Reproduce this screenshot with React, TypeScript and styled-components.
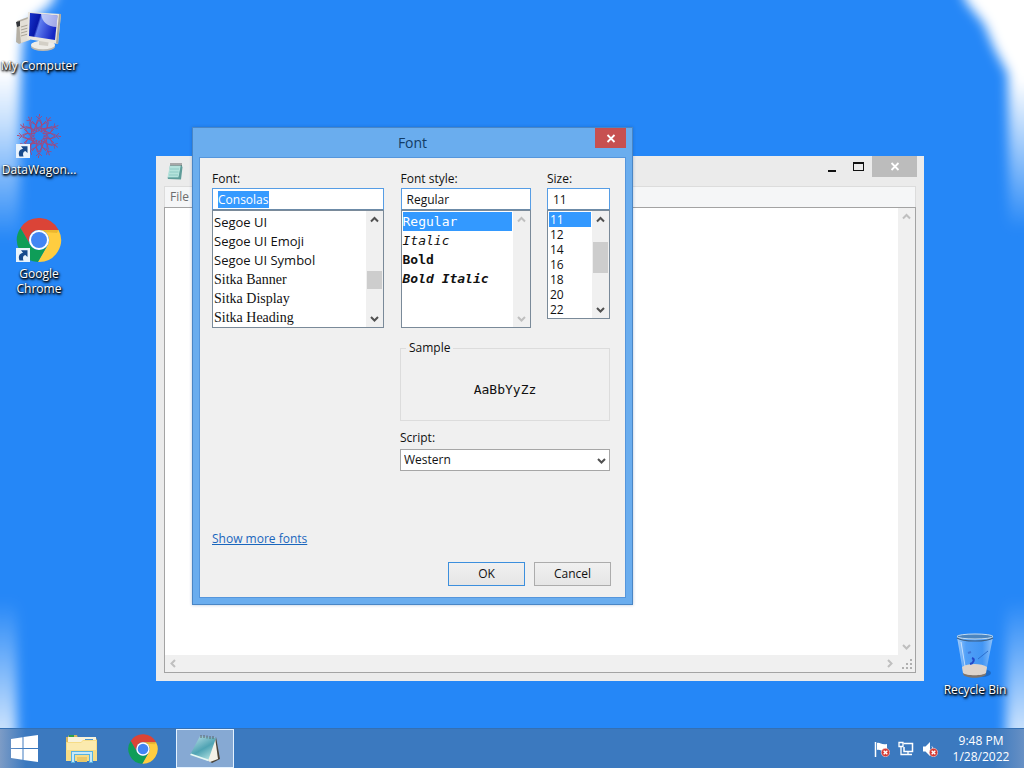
import { useEffect, useRef } from 'react';
import styled, { createGlobalStyle, css } from 'styled-components';

const uiFont = "'Open Sans', 'Noto Sans', sans-serif";
const monoFont = "'DejaVu Sans Mono', monospace";
const serifFont = "'Liberation Serif', serif";

const GlobalStyle = createGlobalStyle`
  * {
    box-sizing: border-box;
  }
  body {
    margin: 0;
    overflow: hidden;
    font-family: ${uiFont};
    font-size: 12px;
    line-height: 16px;
    color: #111;
  }
  button, input, select, textarea {
    font: inherit;
    color: inherit;
  }
  ul {
    margin: 0;
    padding: 0;
    list-style: none;
  }
  svg {
    display: block;
  }
`;

const Screen = styled.div`
  position: relative;
  display: flex;
  flex-direction: column;
  height: 100vh;
  background: #2587f7;
`;

const WallpaperSvg = styled.svg`
  position: absolute;
  inset: 0;
  width: 100%;
  height: 100%;
`;

const Desktop = styled.main`
  position: relative;
  flex: 1;
  display: flex;
  justify-content: space-between;
  padding: 0 11px 0 1px;
`;

const IconColumn = styled.ul<{ $bottom?: boolean }>`
  display: flex;
  flex-direction: column;
  justify-content: ${({ $bottom }) => ($bottom ? 'flex-end' : 'flex-start')};
`;

const ShortcutButton = styled.button`
  display: flex;
  flex-direction: column;
  align-items: center;
  gap: 2px;
  width: 76px;
  height: 104px;
  padding: 8px 0 0;
  border: none;
  background: none;
  color: #fff;
  line-height: 15px;
  text-shadow: 0 1px 2px #000, 1px 1px 2px #000, 1px 2px 3px rgba(0, 0, 0, 0.7);
  span {
    white-space: pre;
  }
`;

const windowFrame = css`
  position: absolute;
  display: flex;
  flex-direction: column;
`;

const NotepadWindow = styled.section`
  ${windowFrame}
  inset: 156px 100px 47px 156px;
  padding: 0 8px 8px;
  background: #ebebeb;
`;

const TitleBar = styled.header`
  display: flex;
  align-items: flex-start;
  justify-content: space-between;
  height: 30px;
  > svg {
    margin: 6px 0 0 2px;
  }
`;

const WindowButtons = styled.div`
  display: flex;
  margin-right: -1px;
`;

const WindowButton = styled.button<{ $close?: boolean }>`
  display: flex;
  align-items: center;
  justify-content: center;
  width: ${({ $close }) => ($close ? '45px' : '27px')};
  height: 21px;
  padding: 0;
  border: none;
  background: ${({ $close }) => ($close ? '#bcbcbc' : 'none')};
`;

const MenuBar = styled.nav`
  height: 21px;
  padding: 2px 5px;
  border: 1px solid #dcdcdc;
  border-bottom: none;
  background: #f5f6f7;
  button {
    padding: 0;
    border: none;
    background: none;
    color: #6d6d6d;
  }
`;

const Editor = styled.div`
  flex: 1;
  display: grid;
  grid-template: 1fr 17px / 1fr 17px;
  border: 1px solid #a3a3a3;
  background: #f0f0f0;
  textarea {
    width: 100%;
    height: 100%;
    padding: 2px;
    border: none;
    outline: none;
    resize: none;
    background: #fff;
    font-family: ${monoFont};
  }
`;

const Grip = styled.svg`
  align-self: end;
  justify-self: end;
  margin: 3px;
`;

const Dialog = styled.section`
  ${windowFrame}
  left: 192px;
  top: 127px;
  width: 441px;
  padding: 0 6px 6px;
  border: 1px solid #4a86c5;
  background: #6aadee;
  box-shadow: 0 0 3px rgba(0, 60, 130, 0.3);
`;

const DialogTitle = styled.header`
  display: grid;
  grid-template-columns: 31px 1fr 31px;
  height: 29px;
  h1 {
    margin: 0;
    padding-top: 5px;
    font-size: 14px;
    font-weight: normal;
    line-height: 20px;
    text-align: center;
    color: #123c66;
  }
`;

const DialogClose = styled.button`
  grid-column: 3;
  display: flex;
  align-items: center;
  justify-content: center;
  height: 20px;
  padding: 0;
  border: none;
  background: #c75050;
`;

const DialogBody = styled.form`
  display: flex;
  flex-direction: column;
  padding: 13px 15px 11px 12px;
  border: 1px solid #5596dc;
  background: #f0f0f0;
`;

const Pickers = styled.div`
  display: grid;
  grid-template-columns: 172px 130px 63px;
  justify-content: space-between;
  align-items: start;
`;

const Field = styled.div`
  display: flex;
  flex-direction: column;
  label {
    margin-bottom: 1px;
  }
  input {
    width: 100%;
    height: 22px;
    padding: 0 5px;
    border: 1px solid #569de5;
    border-bottom-color: #6c8ba8;
    border-radius: 0;
    outline: none;
    background: #fff;
  }
  input::selection {
    background: rgba(51, 153, 255, 0.99);
    color: #fff;
  }
`;

const ListBox = styled.div<{ $short?: boolean }>`
  display: flex;
  height: ${({ $short }) => ($short ? '109px' : '118px')};
  border: 1px solid #7a8a99;
  background: #fff;
  overflow: hidden;
  ul {
    flex: 1;
    padding: 1px 1px 0;
  }
`;

const Option = styled.li<{
  $family?: string;
  $small?: boolean;
  $bold?: boolean;
  $italic?: boolean;
}>`
  height: ${({ $small }) => ($small ? '15px' : '19px')};
  padding-left: ${({ $small }) => ($small ? '1px' : '0')};
  font-family: ${({ $family }) => $family || uiFont};
  font-size: ${({ $small, $family }) => {
    if ($small) return '12px';
    return $family === serifFont ? '14px' : '13px';
  }};
  font-weight: ${({ $bold }) => ($bold ? 'bold' : 'normal')};
  font-style: ${({ $italic }) => ($italic ? 'italic' : 'normal')};
  line-height: ${({ $small, $family }) => {
    if ($small) return '15px';
    return $family === monoFont ? '19px' : '21px';
  }};
  white-space: nowrap;
  &[aria-selected='true'] {
    background: #3399ff;
    color: #fff;
  }
`;

const ScrollTrack = styled.div<{ $horizontal?: boolean }>`
  display: flex;
  flex: none;
  flex-direction: ${({ $horizontal }) => ($horizontal ? 'row' : 'column')};
  justify-content: space-between;
  ${({ $horizontal }) => ($horizontal ? 'height: 17px' : 'width: 17px')};
  background: #f0f0f0;
  button {
    display: flex;
    align-items: center;
    justify-content: center;
    width: 17px;
    height: 17px;
    padding: 0;
    border: none;
    background: none;
  }
`;

const Rail = styled.div`
  flex: 1;
`;

const Thumb = styled.div<{ $offset: number; $size: number }>`
  height: ${({ $size }) => $size}px;
  margin: ${({ $offset }) => $offset}px 1px 0;
  background: #cdcdcd;
`;

const SideColumn = styled.div`
  display: flex;
  flex-direction: column;
  width: 210px;
  margin: 12px 0 0 auto;
`;

const SampleBox = styled.fieldset`
  height: 81px;
  margin: 0 0 9px;
  padding: 0;
  border: 1px solid #dcdcdc;
  legend {
    margin-left: 5px;
    padding: 0 3px;
  }
`;

const SampleText = styled.p`
  margin: 0;
  padding-top: 26px;
  font-family: ${monoFont};
  font-size: 13px;
  text-align: center;
`;

const SelectWrap = styled.div`
  display: grid;
  align-items: center;
  margin-top: 3px;
  > * {
    grid-area: 1 / 1;
  }
  select {
    width: 100%;
    height: 22px;
    padding: 0 3px;
    border: 1px solid #a6a6a6;
    border-radius: 0;
    appearance: none;
    background: #fff;
  }
  svg {
    justify-self: end;
    margin-right: 4px;
    pointer-events: none;
  }
`;

const MoreFonts = styled.a`
  align-self: flex-start;
  margin-top: 60px;
  color: #1a66bd;
`;

const Actions = styled.div`
  display: flex;
  justify-content: flex-end;
  gap: 9px;
  margin: 15px -1px 0 0;
`;

const ActionButton = styled.button<{ $primary?: boolean }>`
  width: 77px;
  height: 24px;
  padding: 0;
  border: 1px solid ${({ $primary }) => ($primary ? '#3c8fdd' : '#acacac')};
  background: linear-gradient(#f0f0f0, #e5e5e5);
`;

const Taskbar = styled.footer`
  position: relative;
  display: flex;
  align-items: stretch;
  justify-content: space-between;
  height: 40px;
  border-top: 1px solid #3470b4;
  background: linear-gradient(
    90deg,
    #7d9cc6,
    #3b79bf 26px,
    #3b79bf calc(100% - 30px),
    #6790c4
  );
`;

const TaskGroup = styled.div`
  display: flex;
  gap: 4px;
`;

const TaskButton = styled.button<{ $start?: boolean; $active?: boolean }>`
  display: flex;
  align-items: center;
  justify-content: center;
  width: ${({ $start }) => ($start ? '48px' : '58px')};
  padding: 0;
  border: 1px solid ${({ $active }) => ($active ? '#e4f2ff' : 'transparent')};
  background: ${({ $active }) => ($active ? '#86a9d3' : 'none')};
`;

const Tray = styled.div`
  display: flex;
  align-items: center;
  gap: 8px;
  padding-right: 16px;
  color: #fff;
`;

const Clock = styled.time`
  display: flex;
  flex-direction: column;
  align-items: center;
  width: 54px;
  margin-left: 8px;
  white-space: nowrap;
`;

function Wallpaper() {
  return (
    <WallpaperSvg viewBox="0 0 1024 768" preserveAspectRatio="none">
      <defs>
        <filter id="glow" x="-50%" y="-20%" width="200%" height="140%">
          <feGaussianBlur stdDeviation="6" />
        </filter>
        <linearGradient id="fade-left" gradientUnits="userSpaceOnUse" x1="0" y1="70" x2="0" y2="240">
          <stop offset="0" stopColor="#fff" />
          <stop offset=".3" stopColor="#fff" stopOpacity=".75" />
          <stop offset="1" stopColor="#fff" stopOpacity="0" />
        </linearGradient>
        <linearGradient id="fade-right" gradientUnits="userSpaceOnUse" x1="0" y1="80" x2="0" y2="230">
          <stop offset="0" stopColor="#fff" />
          <stop offset=".4" stopColor="#fff" stopOpacity=".6" />
          <stop offset="1" stopColor="#fff" stopOpacity="0" />
        </linearGradient>
        <linearGradient id="rise" gradientUnits="userSpaceOnUse" x1="0" y1="600" x2="0" y2="728">
          <stop offset="0" stopColor="#fff" stopOpacity="0" />
          <stop offset="1" stopColor="#fff" stopOpacity=".75" />
        </linearGradient>
      </defs>
      <g filter="url(#glow)">
        <path d="M-40-40H70L52 4 30 22 23 40 21 70 19 260H-40Z" fill="url(#fade-left)" />
        <path d="M1064-40H950L966 2 984 24 994 48 1008 74 1009 260H1064Z" fill="url(#fade-right)" />
        <path d="M-40 600H17V800H-40ZM1006 600H1064V800H1006Z" fill="url(#rise)" />
      </g>
    </WallpaperSvg>
  );
}

const chevrons = {
  up: 'M1 6.5 4.5 3 8 6.5',
  down: 'M1 3 4.5 6.5 8 3',
  left: 'M6 1 2.5 4.5 6 8',
  right: 'M3 1 6.5 4.5 3 8',
};

function Chevron({ dir, faint }: { dir: keyof typeof chevrons; faint?: boolean }) {
  return (
    <svg width="9" height="9" viewBox="0 0 9 9" fill="none">
      <path
        d={chevrons[dir]}
        stroke={faint ? '#bfbfbf' : '#505050'}
        strokeWidth="2"
      />
    </svg>
  );
}

function CloseGlyph() {
  return (
    <svg width="10" height="9" viewBox="0 0 10 9">
      <path d="M1.5 1 8.5 8M8.5 1 1.5 8" stroke="#fff" strokeWidth="1.8" />
    </svg>
  );
}

function ChromeIcon({ size }: { size: number }) {
  return (
    <svg width={size} height={size} viewBox="0 0 48 48">
      <path d="M5.5 12A22 22 0 0 1 43.6 14H24A10 10 0 0 0 15.3 29Z" fill="#db4437" />
      <path d="M43.6 14A22 22 0 0 1 22.9 46L32.7 29A10 10 0 0 0 24 14Z" fill="#ffcd40" />
      <path d="M22.9 46A22 22 0 0 1 5.5 12L15.3 29A10 10 0 0 0 32.7 29Z" fill="#0f9d58" />
      <path d="M24 14H43.6L42 17 30 16Z" fill="#d9a21b" opacity=".5" />
      <circle cx="24" cy="24" r="10" fill="#fff" />
      <circle cx="24" cy="24" r="8" fill="#4285f4" />
    </svg>
  );
}

function ShortcutArrow() {
  return (
    <g>
      <path d="M1 32H15V46H1Z" fill="#e9f3fc" />
      <path
        d="M4.5 44.5C3 41 4 37.500 8 36.800L6 34.200H12.500V41L10.300 39C8 39.500 7.500 42 8.500 44.500Z"
        fill="#174a8c"
      />
    </g>
  );
}

function ComputerIcon() {
  return (
    <svg width="48" height="48" viewBox="0 0 48 48">
      <defs>
        <linearGradient id="monitor" x1="0" y1="0" x2="1" y2=".3">
          <stop offset="0" stopColor="#1836ce" />
          <stop offset=".38" stopColor="#0617a8" />
          <stop offset=".45" stopColor="#5f7df0" />
          <stop offset="1" stopColor="#1426c4" />
        </linearGradient>
      </defs>
      <path d="M2 13 13 9V32L4 36 1 34Z" fill="#b5b0a5" />
      <path d="M4 14 15 10V32L6 35Z" fill="#e3dfd6" />
      <path d="M1 14 5 13V18L2 19Z" fill="#33353a" />
      <path d="M6 19 13 17M6 22 13 20M6 25 13 23M6 28 13 26" stroke="#a9a498" />
      <ellipse cx="28" cy="38.500" rx="12" ry="4.500" fill="#bdb9b0" />
      <ellipse cx="28" cy="37" rx="12" ry="4.200" fill="#eeece7" />
      <path d="M24 30 34 32 33 38 24 37Z" fill="#d3cfc6" />
      <path d="M13 4 46 6 43 36 12 31Z" fill="#e9e6df" />
      <path d="M46 6 43 36 41 35.500 44 6Z" fill="#a9a69c" />
      <path d="M15 5 42.500 7.500 40 32 14 28Z" fill="url(#monitor)" />
      <path d="M26 6 42.500 7.500 41.500 19C33 19 27 14 26 6Z" fill="#fff" opacity=".6" />
    </svg>
  );
}

function WagonIcon() {
  const spokes = Array.from({ length: 12 }, (_, i) => i * 30);
  return (
    <svg width="48" height="48" viewBox="0 0 48 48">
      <g fill="none" stroke="#8a4a96" strokeWidth=".9" opacity=".85">
        {spokes.map((angle) => (
          <g key={angle} transform={`rotate(${angle} 24 24)`}>
            <path d="M24 19 21 13 24 8 27 13ZM24 8V4M21 4 24 7 27 4" stroke="#b0406f" />
            <path d="M21 13 17 9M27 13 31 9M22 17 27 13" stroke="#c23c5c" />
            <path d="M24 3h1" strokeWidth="2" stroke="#c23c5c" />
          </g>
        ))}
        <circle cx="24" cy="24" r="5" strokeDasharray="2 1" stroke="#b9406b" />
        <circle cx="24" cy="24" r="8" strokeDasharray="3 1" stroke="#b9406b" />
      </g>
      <ShortcutArrow />
    </svg>
  );
}

function ChromeShortcutIcon() {
  return (
    <svg width="48" height="48" viewBox="0 0 48 48">
      <ChromeIcon size={48} />
      <ShortcutArrow />
    </svg>
  );
}

function RecycleIcon() {
  return (
    <svg width="48" height="48" viewBox="0 0 48 48">
      <defs>
        <linearGradient id="glass">
          <stop offset="0" stopColor="#c5e0fb" stopOpacity=".8" />
          <stop offset=".25" stopColor="#6fb0f7" stopOpacity=".6" />
          <stop offset=".7" stopColor="#5aa2f2" stopOpacity=".55" />
          <stop offset="1" stopColor="#c5e0fb" stopOpacity=".7" />
        </linearGradient>
      </defs>
      <ellipse cx="31" cy="41" rx="9" ry="4" fill="#123f7c" opacity=".4" />
      <path d="M6 5 12 40C13 46 34 46 35 40L42 5Z" fill="url(#glass)" />
      <path d="M11 35C16 31 31 31 36 35L35 41C34 46 13 46 12 41Z" fill="#ddd4cc" />
      <path d="M12 41C15 44 32 44 35 41L35 42C33 47 14 47 12 42Z" fill="#7d746d" />
      <ellipse cx="24" cy="4.500" rx="18" ry="2.500" fill="#4b85bf" stroke="#c6dcee" />
      <path d="M6 6C12 10 36 10 42 6" fill="none" stroke="#3d5f83" strokeWidth="1.200" />
      <path d="M21 26C24 27 23 31 19 32" fill="none" stroke="#2348c8" strokeWidth="2" />
      <path d="M17 21 20 20" stroke="#3965c9" strokeWidth="2" opacity=".7" />
      <path d="M27 27 37 19" stroke="#2c6fce" />
      <path d="M10 10 14 34" stroke="#fff" opacity=".6" />
    </svg>
  );
}

function NotepadIcon() {
  return (
    <svg width="18" height="19" viewBox="0 0 18 19">
      <path d="M4 3H16L14 17H2Z" fill="#77b8b5" />
      <path d="M4 3H15L12.500 15.500H1.500Z" fill="#b5e3dc" />
      <path d="M15 3 16.500 5 15 17.500 2 17 1.500 15.500H12.500Z" fill="#5f9c99" />
      <path d="M4 7H13M3.500 10H12.500M3 13H12" stroke="#8fcac4" />
      <path d="M5 1V4M7 1V4M9 1V4M11 1V4M13 1V4M15 1V4" stroke="#555" strokeWidth=".9" />
    </svg>
  );
}

function NotepadTaskIcon() {
  return (
    <svg width="32" height="30" viewBox="0 0 32 30">
      <defs>
        <linearGradient id="cover" x1="0" y1="0" x2=".6" y2="1">
          <stop offset="0" stopColor="#c5e6ec" />
          <stop offset=".6" stopColor="#4fa3b3" />
          <stop offset="1" stopColor="#a9dcdd" />
        </linearGradient>
      </defs>
      <path d="M27 3 31 25 23 29 19 26Z" fill="#4a4237" />
      <path d="M26 3 29 25 21 28 18 26Z" fill="#f4f1e7" />
      <path d="M11 2 27 4 19 27 1 21Z" fill="url(#cover)" />
      <path d="M1 21 19 27 19.500 25.500 2 19.500Z" fill="#e7f7f5" />
      <path d="M12 1V4M15 1V4M18 1.500V4.500M21 2V5M24 2V5" stroke="#5a646b" />
    </svg>
  );
}

function WindowsLogo() {
  return (
    <svg width="27" height="27" viewBox="0 0 27 27" fill="#fff">
      <path d="M0 4 11.500 2.300V13H0ZM12.500 2.100 27 0V13H12.500ZM0 14H11.500V24.700L0 23ZM12.500 14H27V27L12.500 24.900Z" />
    </svg>
  );
}

function ExplorerIcon() {
  return (
    <svg width="33" height="30" viewBox="0 0 33 30">
      <path d="M1 3H3L4 1H12L13 4H31L32 6V26H1Z" fill="#d9b75f" />
      <path d="M4 1H9V3H4Z" fill="#2fa04b" />
      <path d="M13 3H19V5H13Z" fill="#cf4632" />
      <path d="M3 3H31V9H3Z" fill="#f8f3dc" />
      <path d="M20 5H28V7H20Z" fill="#4796d3" />
      <path d="M1 8H16L18 6H32V27H1Z" fill="#f6dc86" />
      <path d="M2 9H16L18 7H31V16H2Z" fill="#fbeaae" />
      <path d="M6 17H28V29H24V21H10V29H6Z" fill="#57b2e2" />
      <path d="M7 18H27V20H7ZM7 20H9V28H7ZM25 20H27V28H25Z" fill="#c5e9f8" />
      <path d="M12 23H22V28H12Z" fill="#e9c869" />
    </svg>
  );
}

function ErrorBadge() {
  return (
    <g>
      <circle cx="11.500" cy="11.500" r="4.200" fill="#d63b34" stroke="#f8dada" strokeWidth=".6" />
      <path d="M9.700 9.700 13.300 13.300M13.300 9.700 9.700 13.300" stroke="#fff" strokeWidth="1.400" />
    </g>
  );
}

function FlagIcon() {
  return (
    <svg width="16" height="16" viewBox="0 0 16 16">
      <path d="M1.500 1V16" stroke="#fff" strokeWidth="1.500" />
      <path d="M3 2C6 1 7 4 13 3V10C8 11 6 8 3 9Z" fill="#fff" />
      <ErrorBadge />
    </svg>
  );
}

function NetworkIcon() {
  return (
    <svg width="16" height="16" viewBox="0 0 16 16" fill="none" stroke="#fff">
      <path d="M5.500 2.500H14.500V10.500H6V6" strokeWidth="1.500" />
      <path d="M6 13.500H14M10 11V13M3 6V13.500H6" strokeWidth="1.300" />
      <path d="M1 1.500H5V5.500H1Z" strokeWidth="1.300" />
    </svg>
  );
}

function VolumeIcon() {
  return (
    <svg width="16" height="16" viewBox="0 0 16 16">
      <path d="M1 5.500H3.500L8 1V15L3.500 10.500H1Z" fill="#fff" />
      <path d="M10 5.500C11 6.500 11 9 10 10" fill="none" stroke="#fff" />
      <ErrorBadge />
    </svg>
  );
}

type ScrollProps = {
  disabled?: boolean;
  horizontal?: boolean;
  thumb?: { offset: number; size: number };
};

function Scrollbar({ disabled, horizontal, thumb }: ScrollProps) {
  return (
    <ScrollTrack $horizontal={horizontal}>
      <button type="button" aria-label="Scroll back" tabIndex={-1}>
        <Chevron dir={horizontal ? 'left' : 'up'} faint={disabled} />
      </button>
      <Rail>
        {thumb && <Thumb $offset={thumb.offset} $size={thumb.size} />}
      </Rail>
      <button type="button" aria-label="Scroll forward" tabIndex={-1}>
        <Chevron dir={horizontal ? 'right' : 'down'} faint={disabled} />
      </button>
    </ScrollTrack>
  );
}

const fonts = [
  { name: 'Segoe UI' },
  { name: 'Segoe UI Emoji' },
  { name: 'Segoe UI Symbol' },
  { name: 'Sitka Banner', family: serifFont },
  { name: 'Sitka Display', family: serifFont },
  { name: 'Sitka Heading', family: serifFont },
];

const styles = [
  { name: 'Regular' },
  { name: 'Italic', italic: true },
  { name: 'Bold', bold: true },
  { name: 'Bold Italic', bold: true, italic: true },
];

const sizes = [11, 12, 14, 16, 18, 20, 22];

function Notepad() {
  return (
    <NotepadWindow>
      <TitleBar>
        <NotepadIcon />
        <WindowButtons>
          <WindowButton type="button" aria-label="Minimize">
            <svg width="11" height="11" viewBox="0 0 11 11">
              <path d="M2 9H10V11H2Z" fill="#111" />
            </svg>
          </WindowButton>
          <WindowButton type="button" aria-label="Maximize">
            <svg width="11" height="9" viewBox="0 0 11 9">
              <path d="M0 0H11V9H0ZM1 2V8H10V2Z" fill="#111" fillRule="evenodd" />
            </svg>
          </WindowButton>
          <WindowButton type="button" aria-label="Close" $close>
            <CloseGlyph />
          </WindowButton>
        </WindowButtons>
      </TitleBar>
      <MenuBar>
        <button type="button">File</button>
      </MenuBar>
      <Editor>
        <textarea aria-label="Text Editor" />
        <Scrollbar disabled />
        <Scrollbar horizontal disabled />
        <Grip width="10" height="10" viewBox="0 0 10 10" fill="#b0b0b0">
          <path d="M8 0h2v2H8zM4 4h2v2H4zM8 4h2v2H8zM0 8h2v2H0zM4 8h2v2H4zM8 8h2v2H8z" />
        </Grip>
      </Editor>
    </NotepadWindow>
  );
}

function FontDialog() {
  const fontInput = useRef<HTMLInputElement>(null);

  useEffect(() => {
    fontInput.current?.focus();
    fontInput.current?.select();
  }, []);

  return (
    <Dialog role="dialog" aria-labelledby="dialog-title">
      <DialogTitle>
        <span />
        <h1 id="dialog-title">Font</h1>
        <DialogClose type="button" aria-label="Close">
          <CloseGlyph />
        </DialogClose>
      </DialogTitle>
      <DialogBody onSubmit={(e) => e.preventDefault()}>
        <Pickers>
          <Field>
            <label htmlFor="font">Font:</label>
            <input id="font" ref={fontInput} defaultValue="Consolas" spellCheck={false} />
            <ListBox>
              <ul role="listbox" aria-label="Fonts">
                {fonts.map(({ name, family }) => (
                  <Option key={name} role="option" $family={family}>
                    {name}
                  </Option>
                ))}
              </ul>
              <Scrollbar thumb={{ offset: 43, size: 18 }} />
            </ListBox>
          </Field>
          <Field>
            <label htmlFor="style">Font style:</label>
            <input id="style" defaultValue="Regular" />
            <ListBox>
              <ul role="listbox" aria-label="Font styles">
                {styles.map(({ name, bold, italic }) => (
                  <Option
                    key={name}
                    role="option"
                    aria-selected={name === 'Regular'}
                    $family={monoFont}
                    $bold={bold}
                    $italic={italic}
                  >
                    {name}
                  </Option>
                ))}
              </ul>
              <Scrollbar disabled />
            </ListBox>
          </Field>
          <Field>
            <label htmlFor="size">Size:</label>
            <input id="size" defaultValue="11" />
            <ListBox $short>
              <ul role="listbox" aria-label="Sizes">
                {sizes.map((size) => (
                  <Option key={size} role="option" aria-selected={size === 11} $small>
                    {size}
                  </Option>
                ))}
              </ul>
              <Scrollbar thumb={{ offset: 14, size: 31 }} />
            </ListBox>
          </Field>
        </Pickers>
        <SideColumn>
          <SampleBox>
            <legend>Sample</legend>
            <SampleText>AaBbYyZz</SampleText>
          </SampleBox>
          <label htmlFor="script">Script:</label>
          <SelectWrap>
            <select id="script">
              <option>Western</option>
            </select>
            <Chevron dir="down" />
          </SelectWrap>
        </SideColumn>
        <MoreFonts href="#fonts">Show more fonts</MoreFonts>
        <Actions>
          <ActionButton type="submit" $primary>
            OK
          </ActionButton>
          <ActionButton type="button">Cancel</ActionButton>
        </Actions>
      </DialogBody>
    </Dialog>
  );
}

const shortcuts = [
  { name: 'My Computer', Icon: ComputerIcon },
  { name: 'DataWagon...', Icon: WagonIcon },
  { name: 'Google\nChrome', Icon: ChromeShortcutIcon },
];

function App() {
  return (
    <Screen>
      <GlobalStyle />
      <Wallpaper />
      <Desktop>
        <IconColumn>
          {shortcuts.map(({ name, Icon }) => (
            <li key={name}>
              <ShortcutButton type="button">
                <Icon />
                <span>{name}</span>
              </ShortcutButton>
            </li>
          ))}
        </IconColumn>
        <IconColumn $bottom>
          <li>
            <ShortcutButton type="button">
              <RecycleIcon />
              <span>Recycle Bin</span>
            </ShortcutButton>
          </li>
        </IconColumn>
        <Notepad />
        <FontDialog />
      </Desktop>
      <Taskbar>
        <TaskGroup>
          <TaskButton type="button" aria-label="Start" $start>
            <WindowsLogo />
          </TaskButton>
          <TaskButton type="button" aria-label="File Explorer">
            <ExplorerIcon />
          </TaskButton>
          <TaskButton type="button" aria-label="Google Chrome">
            <ChromeIcon size={32} />
          </TaskButton>
          <TaskButton type="button" aria-label="Notepad" $active>
            <NotepadTaskIcon />
          </TaskButton>
        </TaskGroup>
        <Tray>
          <FlagIcon />
          <NetworkIcon />
          <VolumeIcon />
          <Clock>
            <span>9:48 PM</span>
            <span>1/28/2022</span>
          </Clock>
        </Tray>
      </Taskbar>
    </Screen>
  );
}

export default App;
